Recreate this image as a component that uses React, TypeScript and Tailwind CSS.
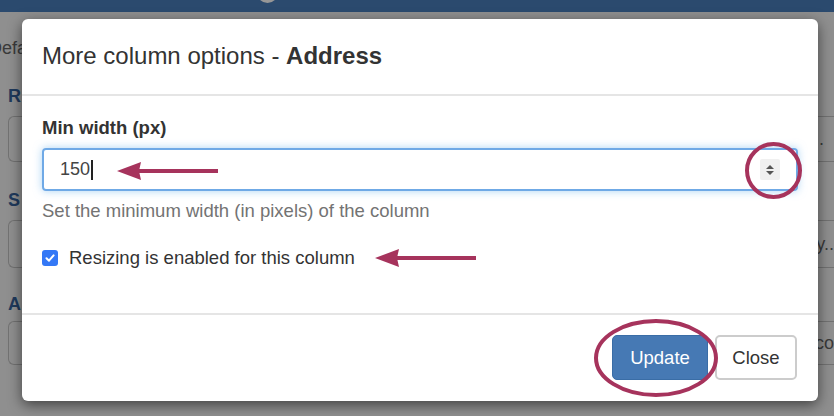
import React from "react";

const font = { fontFamily: '"Liberation Sans", Arial, sans-serif' };

function BackgroundPage() {
  return (
    <div className="h-[416px] w-full overflow-hidden bg-[#8f8f8f]">
      {/* Nav bar (dimmed) */}
      <div className="relative h-[12px] bg-[#2b4a6e]">
        <div className="absolute left-[257px] top-[-18px] h-[21px] w-[21px] rounded-full bg-[#979797]" />
      </div>

      <div className="pt-[26px] text-[18px] text-[#3a3a3a]">
        <div className="w-[22px] overflow-hidden whitespace-nowrap leading-[20px]">
          <span className="ml-[-11px]">Defa</span>
        </div>

        {/* Field rows */}
        <div className="mt-[28px] flex flex-col">
          <div className="ml-[8px] w-[14px] overflow-hidden font-bold leading-[20px] text-[#1f3a5c]">R</div>
          <div className="ml-[8px] mt-[10px] flex h-[46px] items-center justify-end rounded-l-[6px] border border-r-0 border-[#727272] pr-[10px]">
            .
          </div>

          <div className="ml-[8px] mt-[28px] w-[14px] overflow-hidden font-bold leading-[20px] text-[#1f3a5c]">S</div>
          <div className="ml-[8px] mt-[10px] flex h-[48px] items-center justify-end rounded-l-[6px] border border-r-0 border-[#727272]">
            y..
          </div>

          <div className="ml-[8px] mt-[26px] w-[14px] overflow-hidden font-bold leading-[20px] text-[#1f3a5c]">A</div>
          <div className="ml-[8px] mt-[7px] flex h-[44px] items-center justify-end rounded-l-[6px] border border-r-0 border-[#727272]">
            co
          </div>
        </div>
      </div>
    </div>
  );
}

function Spinner() {
  return (
    <div className="flex h-[21px] w-[20px] items-center justify-center rounded-[2px] bg-[#f0f0f0]">
      <svg width="10" height="12" viewBox="0 0 10 12">
        <path d="M5 1 L9 5 L1 5 Z" fill="#555" />
        <path d="M5 11 L9 7 L1 7 Z" fill="#555" />
      </svg>
    </div>
  );
}

function Modal() {
  return (
    <div className="absolute left-[22px] top-[19px] w-[796px] rounded-[6px] bg-white shadow-[0_4px_14px_rgba(0,0,0,0.55)]">
      {/* Header */}
      <div className="border-b-2 border-[#e5e5e5] px-[20px] pb-[25px] pt-[24px]">
        <h4 className="text-[24px] leading-[26px] text-[#333]">
          More column options - <span className="font-bold">Address</span>
        </h4>
      </div>

      {/* Body */}
      <div className="px-[20px] pb-[43px] pt-[20px]">
        <label className="block text-[18.5px] font-bold leading-[24px] text-[#333]">Min width (px)</label>
        <div className="mt-[8px] flex h-[43px] items-center rounded-[4px] border-2 border-[#6fa9e6] pl-[16px] pr-[16px] shadow-[0_0_8px_rgba(102,175,233,0.55)]">
          <span className="text-[18px] text-[#444]">150</span>
          <span className="ml-[1px] h-[20px] w-[1.5px] bg-[#222]" />
          <div className="flex-1" />
          <Spinner />
        </div>
        <p className="mt-[8px] text-[18.5px] leading-[24px] text-[#737373]">
          Set the minimum width (in pixels) of the column
        </p>
        <div className="mt-[23px] flex items-center gap-[11px]">
          <div className="flex h-[16px] w-[16px] items-center justify-center rounded-[3px] bg-[#3478f6]">
            <svg width="12" height="12" viewBox="0 0 12 12">
              <path d="M2.5 6.3 L5 8.7 L9.6 3.4" fill="none" stroke="#fff" strokeWidth="2" strokeLinecap="round" strokeLinejoin="round" />
            </svg>
          </div>
          <span className="text-[18.5px] leading-[24px] text-[#333]">Resizing is enabled for this column</span>
        </div>
      </div>

      {/* Footer */}
      <div className="flex justify-end gap-[7px] border-t-2 border-[#e5e5e5] pb-[21px] pr-[21px] pt-[20px]">
        <button className="h-[45px] w-[96px] rounded-[5px] border border-[#3a6da6] bg-[#4679b4] text-[18.5px] text-white">
          Update
        </button>
        <button className="h-[45px] w-[82px] rounded-[5px] border-2 border-[#cccccc] bg-white text-[18.5px] text-[#333]">
          Close
        </button>
      </div>
    </div>
  );
}

function Annotations() {
  const c = "#a6335c";
  return (
    <svg className="pointer-events-none absolute left-0 top-0" width="834" height="416" viewBox="0 0 834 416">
      {/* Arrow to input */}
      <line x1="136" y1="171" x2="218" y2="171" stroke={c} strokeWidth="4" />
      <path d="M117 171 L141 162 L139 171 L141 180 Z" fill={c} />
      {/* Arrow to checkbox */}
      <line x1="394" y1="258" x2="476" y2="258" stroke={c} strokeWidth="4" />
      <path d="M375 258 L399 249 L397 258 L399 267 Z" fill={c} />
      {/* Circle round spinner */}
      <circle cx="773.5" cy="170.5" r="26.5" fill="none" stroke={c} strokeWidth="4" />
      {/* Ellipse round Update */}
      <ellipse cx="656" cy="358" rx="60" ry="37" fill="none" stroke={c} strokeWidth="4" />
    </svg>
  );
}

export default function App() {
  return (
    <div className="relative h-[416px] w-[834px] overflow-hidden" style={font}>
      <BackgroundPage />
      <Modal />
      <Annotations />
    </div>
  );
}
